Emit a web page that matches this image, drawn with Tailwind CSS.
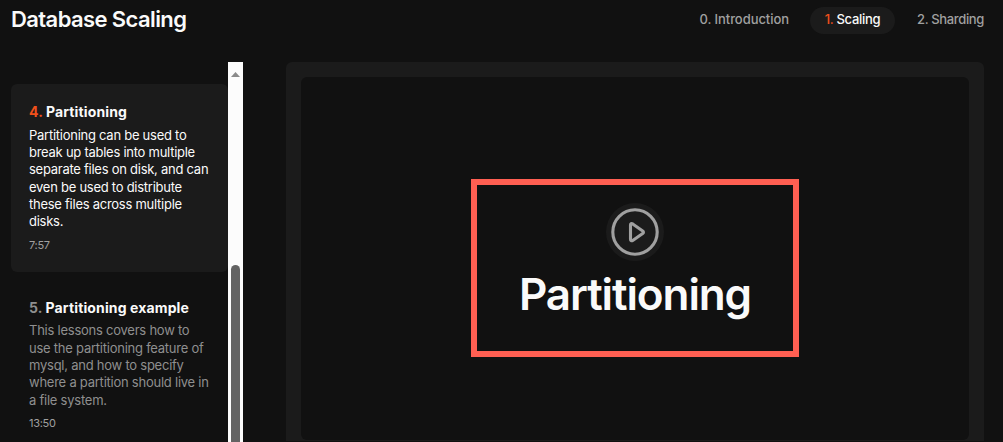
<!DOCTYPE html>
<html lang="en">
    <head>
        <meta charset="UTF-8">
        <meta name="viewport" content="width=device-width, initial-scale=1.0">
        <title>Database Scaling</title>
        <script src="https://cdn.jsdelivr.net/npm/@tailwindcss/browser@4"></script>
    </head>
    <body class="bg-[#111] font-['Inter',sans-serif] text-[#fafafa] h-[442px] overflow-hidden">
        <div class="flex flex-col h-[441px] pl-[11px] pr-[19px]">
            <!-- Header -->
            <header class="flex justify-between items-start h-[62px] shrink-0">
                <h1 class="mt-[3px] text-[22px] leading-8 font-semibold tracking-[-0.6px] whitespace-nowrap">Database Scaling</h1>
                <nav class="flex mt-[7px] text-[13px] leading-[25px] font-medium text-[#a0a0a0] whitespace-nowrap">
                    <a href="#" class="mr-[21px] tracking-[-0.06px]">0. Introduction</a>
                    <a href="#" class="w-[85px] h-[27px] mr-[22px] text-center rounded-full bg-[#1b1b1b] text-[#fafafa] tracking-[-0.3px]"><span class="text-[#f1501b]">1.</span> Scaling</a>
                    <a href="#" class="tracking-[-0.35px]">2. Sharding</a>
                </nav>
            </header>

            <main class="flex flex-1 min-h-0">
                <!-- Lesson list -->
                <aside class="w-[217px] shrink-0 pt-[22px] overflow-hidden whitespace-nowrap">
                    <a href="#" class="block h-[188px] px-[18px] pt-[18px] rounded-md bg-[#1b1b1b]">
                        <h2 class="text-[14px] leading-5 font-bold tracking-[0.13px]"><span class="text-[#f1501b]">4.</span> Partitioning</h2>
                        <p class="mt-[4.6px] text-[13px] leading-[17.33px] tracking-[-0.26px]">Partitioning can be used to<br>break up tables into multiple<br>separate files on disk, and can<br>even be used to distribute<br>these files across multiple<br>disks.</p>
                        <p class="mt-[6.4px] text-[11px] leading-4 tracking-[-0.3px] text-[#a0a0a0]">7:57</p>
                    </a>
                    <a href="#" class="block mt-2 px-[18px] pt-[18px]">
                        <h2 class="text-[14px] leading-5 font-bold tracking-[0.13px]"><span class="text-[#8f8f8f]">5.</span> Partitioning example</h2>
                        <p class="mt-[4.3px] text-[13px] leading-[17.33px] tracking-[-0.24px] text-[#8f8f8f]">This lessons covers how to<br>use the partitioning feature of<br>mysql, and how to specify<br>where a partition should live in<br>a file system.</p>
                        <p class="mt-[5.7px] text-[11px] leading-4 tracking-[-0.3px] text-[#a0a0a0]">13:50</p>
                    </a>
                </aside>

                <!-- Scrollbar -->
                <div class="flex flex-col items-center w-[15px] h-[380px] shrink-0 bg-[#fcfcfc]">
                    <svg class="mt-[10px] w-[9px] h-[5px] shrink-0" viewBox="0 0 9 5" fill="#8b8b8b"><path d="M4.5 0 9 5H0z"/></svg>
                    <div class="mt-[188px] w-[9px] flex-1 rounded-t-full bg-[#636363]"></div>
                </div>

                <!-- Video -->
                <section class="flex-1 ml-[43px] pt-[15px] px-[15px] pb-px rounded-t-md bg-[#1b1b1b]">
                    <div class="h-full pt-[102px] rounded-md bg-[#111]">
                        <div class="flex flex-col items-center w-[328px] h-[178px] ml-[170px] pt-[18px] border-6 border-[#ff5f52]">
                            <div class="flex items-center justify-center w-[58px] h-[58px] shrink-0 rounded-full bg-[#1b1b1b]">
                                <svg class="w-12 h-12" viewBox="0 0 48 48" fill="none" stroke="#a0a0a0" stroke-width="3.1" stroke-linecap="round" stroke-linejoin="round">
                                    <circle cx="24" cy="24" r="22.2"/>
                                    <path d="M19.5 17v14.200c0 1.500 1 2 2.200 1.200l10-7c1-.7 1-1.800 0-2.500l-10-7c-1.200-.8-2.200-.3-2.200 1.100z"/>
                                </svg>
                            </div>
                            <h2 class="mt-[6px] text-[44px] leading-[54px] font-semibold tracking-[-1.1px] whitespace-nowrap">Partitioning</h2>
                        </div>
                    </div>
                </section>
            </main>
        </div>
    </body>
</html>
